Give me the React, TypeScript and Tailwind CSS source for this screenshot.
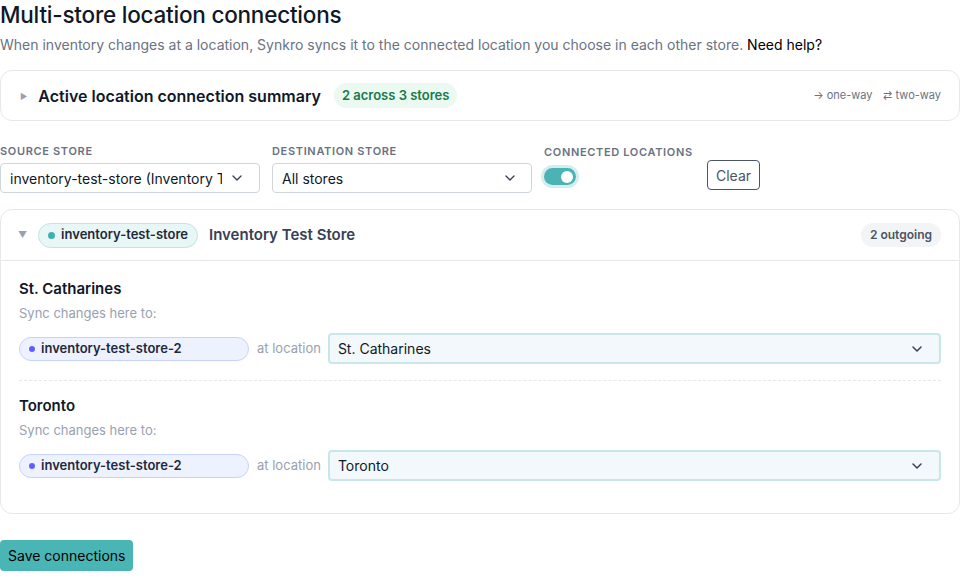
import React from "react";
import { ChevronDown } from "lucide-react";

interface Connection {
  location: string;
  store: string;
  target: string;
}

const connections: Connection[] = [
  { location: "St. Catharines", store: "inventory-test-store-2", target: "St. Catharines" },
  { location: "Toronto", store: "inventory-test-store-2", target: "Toronto" },
];

const FieldLabel: React.FC<{ children: React.ReactNode }> = ({ children }) => (
  <div className="text-[11px] font-semibold uppercase tracking-[0.06em] text-gray-500 leading-none">
    {children}
  </div>
);

const ConnectionRow: React.FC<{ item: Connection; last: boolean }> = ({ item, last }) => (
  <div className={last ? "pt-[15px] pb-[32px]" : "pt-[18px] pb-[16px] border-b border-dashed border-gray-200"}>
    <div className="text-[15px] font-semibold text-gray-900 leading-5">{item.location}</div>
    <div className="mt-[4px] text-[13px] text-gray-400 leading-5">Sync changes here to:</div>
    <div className="mt-[10px] flex items-center">
      <div className="flex h-[24px] w-[230px] items-center gap-[6px] rounded-full border border-indigo-200 bg-indigo-50 px-[9px]">
        <span className="h-[6px] w-[6px] rounded-full bg-indigo-500" />
        <span className="text-[13px] font-semibold text-gray-800">{item.store}</span>
      </div>
      <span className="ml-[8px] text-[13px] text-gray-400">at location</span>
      <div className="ml-[7px] flex h-[31px] flex-1 items-center justify-between rounded-[4px] border-2 border-[#c9e7eb] bg-[#f2f8fb] pl-[8px] pr-[14px]">
        <span className="text-[14px] text-gray-900">{item.target}</span>
        <ChevronDown className="h-[16px] w-[16px] text-gray-700" strokeWidth={2.25} />
      </div>
    </div>
  </div>
);

export default function App() {
  return (
    <div className="min-h-[584px] w-[960px] overflow-hidden bg-white font-['Inter',sans-serif] text-gray-900">
      <h1 className="pt-[1px] text-[22.5px] font-medium leading-[28px] tracking-[-0.01em] text-gray-900">
        Multi-store location connections
      </h1>
      <p className="mt-[6px] text-[14px] leading-5 text-gray-500">
        When inventory changes at a location, Synkro syncs it to the connected location you choose in each other
        store. <span className="text-black">Need help?</span>
      </p>

      {/* Summary */}
      <div className="mt-[15px] flex h-[51px] items-center rounded-xl border border-gray-200 pl-[19px] pr-[18px]">
        <span className="text-[8px] text-gray-400">▶</span>
        <span className="ml-[11px] text-[16px] font-semibold text-gray-900">Active location connection summary</span>
        <span className="ml-[13px] rounded-full bg-[#ebf9f1] px-[8px] py-[3px] text-[13px] font-semibold text-[#157a4a]">
          2 across 3 stores
        </span>
        <div className="ml-auto flex items-center gap-[11px] text-[11px] text-gray-500">
          <span>→ one-way</span>
          <span>⇄ two-way</span>
        </div>
      </div>

      {/* Filters */}
      <div className="mt-[25px] flex items-start">
        <div className="w-[260px]">
          <FieldLabel>Source store</FieldLabel>
          <div className="mt-[6px] flex h-[30px] items-center justify-between rounded-[4px] border border-gray-300 pl-[9px] pr-[14px]">
            <span className="w-[212px] overflow-hidden whitespace-nowrap text-[14px] text-gray-900">
              inventory-test-store (Inventory Test Store)
            </span>
            <ChevronDown className="h-[16px] w-[16px] text-gray-700" strokeWidth={2} />
          </div>
        </div>
        <div className="ml-[12px] w-[260px]">
          <FieldLabel>Destination store</FieldLabel>
          <div className="mt-[6px] flex h-[30px] items-center justify-between rounded-[4px] border border-gray-300 pl-[9px] pr-[13px]">
            <span className="text-[14px] text-gray-900">All stores</span>
            <ChevronDown className="h-[16px] w-[16px] text-gray-700" strokeWidth={2} />
          </div>
        </div>
        <div className="ml-[12px] w-[163px] pt-[1px]">
          <FieldLabel>Connected locations</FieldLabel>
          <div className="-ml-[3px] mt-[7px] flex h-[23px] w-[38px] items-center rounded-full bg-[#d4eef0] p-[3px]">
            <div className="flex h-[17px] w-[32px] items-center justify-end rounded-full bg-[#4bb3b4] pr-[3px]">
              <span className="h-[12px] w-[12px] rounded-full bg-white" />
            </div>
          </div>
        </div>
        <button className="mt-[14px] h-[30px] rounded-[4px] border border-gray-600 px-[8px] text-[14px] text-gray-600">
          Clear
        </button>
      </div>

      {/* Store card */}
      <div className="mt-[16px] rounded-xl border border-gray-200">
        <div className="flex h-[51px] items-center border-b border-gray-200 pl-[17px] pr-[18px]">
          <span className="text-[9px] text-gray-400">▼</span>
          <div className="ml-[11px] flex h-[25px] items-center gap-[6px] rounded-full border border-[#bfe5e6] bg-[#e9f6f6] px-[9px]">
            <span className="h-[7px] w-[7px] rounded-full bg-[#3fb0b0]" />
            <span className="text-[13px] font-semibold text-gray-800">inventory-test-store</span>
          </div>
          <span className="ml-[11px] text-[15px] font-semibold text-gray-700">Inventory Test Store</span>
          <span className="ml-auto rounded-full bg-gray-100 px-[9px] py-[3px] text-[12px] font-semibold text-gray-600">
            2 outgoing
          </span>
        </div>
        <div className="px-[18px]">
          {connections.map((c, i) => (
            <ConnectionRow key={c.location} item={c} last={i === connections.length - 1} />
          ))}
        </div>
      </div>

      <button className="mt-[26px] h-[31px] rounded-[4px] bg-[#4ab5b5] px-[8px] text-[14px] text-black">
        Save connections
      </button>
    </div>
  );
}
